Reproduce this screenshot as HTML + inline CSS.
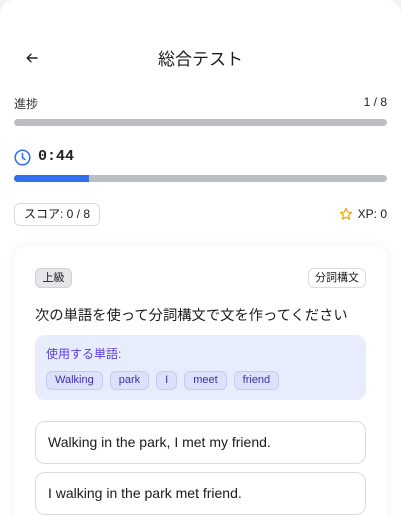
<!DOCTYPE html>
<html><head><meta charset="utf-8"><style>
*{box-sizing:border-box;margin:0;padding:0}
html,body{width:401px;height:516px;overflow:hidden}
body{background:#f2f2f4;font-family:"Liberation Sans","Noto Sans CJK JP",sans-serif;color:#1a1a1a;position:relative}
.page{position:absolute;left:0;top:0;width:401px;height:516px;background:#fff;border-radius:14px 14px 0 0;overflow:hidden}
.abs{position:absolute}
.bar{position:absolute;left:14px;width:373px;height:7px;border-radius:4px;background:#bdbdc4;overflow:hidden}
.card{position:absolute;left:14px;top:246px;width:373px;height:290px;background:#fff;border-radius:12px;box-shadow:0 0 12px rgba(0,0,0,0.06)}
.chip{display:inline-block;height:19px;line-height:17px;padding:0 8px;border:1px solid #c7cbef;background:#dde2fb;color:#3a2fb0;border-radius:6px;font-size:11px;margin-right:7px}
.opt{position:absolute;left:35px;width:331px;height:43px;border:1px solid #dcdce0;border-radius:10px;font-size:14px;line-height:41px;padding-left:12px}
</style></head><body>
<div class="page">
<svg class="abs" style="left:26px;top:53px" width="12" height="10" viewBox="0 0 12 10"><path d="M11 5H1.5M5 1.2L1.2 5 5 8.8" fill="none" stroke="#222" stroke-width="1.4" stroke-linecap="round" stroke-linejoin="round"/></svg>
<div class="abs" style="left:0;width:401px;top:45px;text-align:center;font-size:17px">総合テスト</div>
<div class="abs" style="left:14px;top:95px;font-size:12px;color:#333">進捗</div>
<div class="abs" style="right:14px;top:95px;font-size:12px;color:#222">1 / 8</div>
<div class="bar" style="top:119px"></div>
<svg class="abs" style="left:14px;top:149px" width="17" height="17" viewBox="0 0 17 17"><circle cx="8.5" cy="8.5" r="7.3" fill="none" stroke="#2f6ff0" stroke-width="1.5"/><path d="M8.5 4.5V8.8L11 10.5" fill="none" stroke="#2f6ff0" stroke-width="1.5" stroke-linecap="round"/></svg>
<div class="abs" style="left:38px;top:148px;font-family:'Liberation Mono',monospace;font-size:15px;font-weight:bold;color:#222">0:44</div>
<div class="bar" style="top:175px"><div style="width:75px;height:7px;background:#2f6ff0"></div></div>
<div class="abs" style="left:14px;top:203px;width:86px;height:23px;border:1px solid #dcdce0;border-radius:6px;font-size:12px;line-height:21px;text-align:center">スコア: 0 / 8</div>
<svg class="abs" style="left:339px;top:207px" width="14" height="14" viewBox="0 0 24 24"><path d="M12 2.5l2.9 6.1 6.6.8-4.9 4.6 1.3 6.6L12 17.3l-5.9 3.3 1.3-6.6L2.5 9.4l6.6-.8z" fill="none" stroke="#e8a600" stroke-width="2" stroke-linejoin="round"/></svg>
<div class="abs" style="right:14px;top:207px;font-size:12px">XP: 0</div>
<div class="card"></div>
<div class="abs" style="left:35px;top:268px;width:37px;height:20px;background:#e6e6ea;border:1px solid #cfcfd4;border-radius:6px;font-size:11px;line-height:18px;text-align:center">上級</div>
<div class="abs" style="left:308px;top:268px;width:58px;height:20px;border:1px solid #dcdce0;border-radius:6px;font-size:11px;line-height:18px;text-align:center">分詞構文</div>
<div class="abs" style="left:35px;top:304px;font-size:14.3px">次の単語を使って分詞構文で文を作ってください</div>
<div class="abs" style="left:35px;top:335px;width:331px;height:65px;background:#e8edfd;border-radius:10px;padding:10px 0 0 11px">
<div style="font-size:12px;color:#5a3de0;margin-bottom:8px">使用する単語:</div>
<span class="chip">Walking</span><span class="chip">park</span><span class="chip">I</span><span class="chip">meet</span><span class="chip">friend</span>
</div>
<div class="opt" style="top:421px">Walking in the park, I met my friend.</div>
<div class="opt" style="top:472px">I walking in the park met friend.</div>
</div>
</body></html>
